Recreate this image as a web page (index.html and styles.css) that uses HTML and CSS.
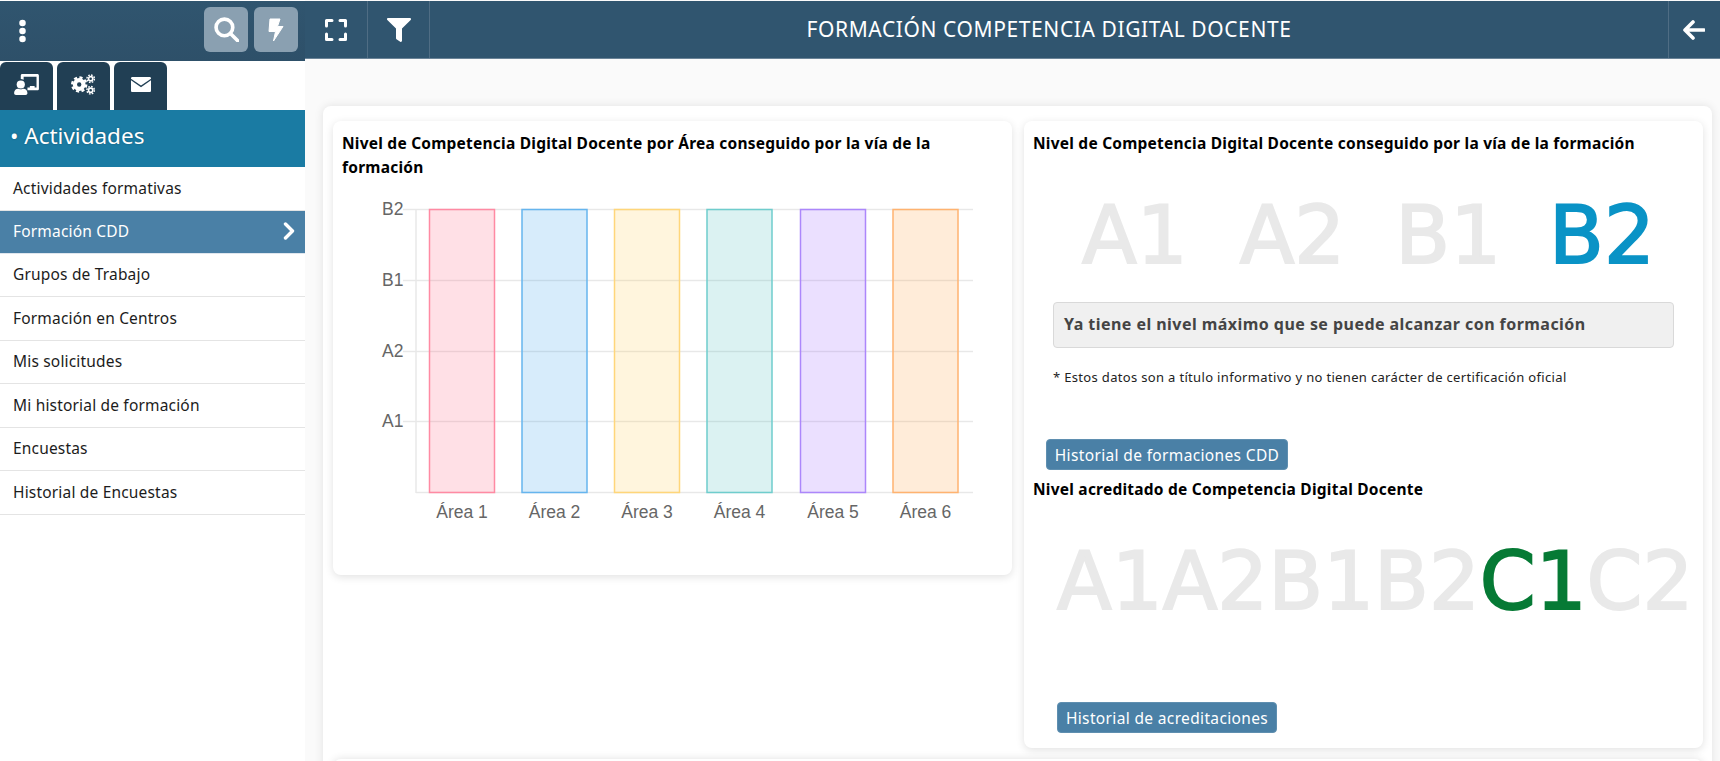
FILE: index.html
```html
<!DOCTYPE html>
<html lang="es">
<head>
<meta charset="utf-8">
<title>Formación Competencia Digital Docente</title>
<link rel="stylesheet" href="styles.css">
</head>
<body>
<div class="app">
  <aside class="sidebar">
    <div class="side-top">
      <svg class="dots" viewBox="0 0 10 26"><circle cx="5" cy="4" r="3.6"/><circle cx="5" cy="13" r="3.6"/><circle cx="5" cy="22" r="3.6"/></svg>
      <div class="side-actions">
        <button class="square"><svg viewBox="0 0 24 24" class="search"><circle cx="10" cy="10" r="8"/><path d="M16 16l7 7"/></svg></button>
        <button class="square"><svg viewBox="0 0 16 24" class="bolt"><path d="M2 1h10L9.500 8.500H15L5.500 23l2-9.500H1z"/></svg></button>
      </div>
    </div>
    <div class="tabs">
      <div class="tab"><svg viewBox="0 0 26 22" class="tab-ic"><path d="M7 1.500C7 .7 7.700 0 8.500 0h16C25.300 0 26 .7 26 1.500v14.200c0 .8-.7 1.400-1.500 1.400H14v-3h2.500v-1.500h5v1.500H23.500V2.800H10v3.300A6 6 0 0 0 7 5.300z"/><circle cx="7" cy="11" r="4.300"/><path d="M0 20c0-3 2.200-4.500 4-4.500.9 0 1.600.6 3 .6s2.100-.6 3-.6c1.800 0 4 1.500 4 4.500 0 1.200-.8 2-2 2H2c-1.200 0-2-.8-2-2z"/></svg></div>
      <div class="tab"><svg viewBox="0 0 26 22" class="tab-ic"><g fill="none" stroke="#fff"><circle cx="8.500" cy="11" r="4.500" stroke-width="4.400"/><circle cx="8.500" cy="11" r="7.400" stroke-width="2.400" stroke-dasharray="3.300 2.510"/><circle cx="20.500" cy="5" r="2.200" stroke-width="1.700"/><circle cx="20.500" cy="5" r="3.900" stroke-width="1.500" stroke-dasharray="1.700 1.360"/><circle cx="20.500" cy="17" r="2.200" stroke-width="1.700"/><circle cx="20.500" cy="17" r="3.900" stroke-width="1.500" stroke-dasharray="1.700 1.360"/></g></svg></div>
      <div class="tab"><svg viewBox="0 0 20 15" class="mail"><path d="M1.300 0h17.400c.7 0 1.300.6 1.300 1.300v.4L10 8.600 0 1.700v-.4C0 .6.600 0 1.300 0z"/><path d="M0 3.300l10 6.900 10-6.900v10.400c0 .7-.6 1.300-1.300 1.300H1.300C.6 15 0 14.400 0 13.700z"/></svg></div>
    </div>
    <h2 class="section">• Actividades</h2>
    <nav class="menu">
      <a class="item">Actividades formativas</a>
      <a class="item active">Formación CDD<svg viewBox="0 0 12 18" class="chev"><path d="M2.500 2l7 7-7 7"/></svg></a>
      <a class="item">Grupos de Trabajo</a>
      <a class="item">Formación en Centros</a>
      <a class="item">Mis solicitudes</a>
      <a class="item">Mi historial de formación</a>
      <a class="item">Encuestas</a>
      <a class="item">Historial de Encuestas</a>
    </nav>
  </aside>

  <div class="main">
    <header class="topbar">
      <div class="tool tool-a"><svg viewBox="0 0 22 22" class="expand"><path d="M1.500 7V1.500H7M15 1.500h5.500V7M20.500 15v5.500H15M7 20.500H1.500V15"/></svg></div>
      <div class="tool tool-b"><svg viewBox="0 0 512 512" class="ic24"><path d="M487.976 0H24.028C2.71 0-8.047 25.866 7.058 40.971L192 225.941V432c0 7.831 3.821 15.17 10.237 19.662l80 55.98C298.02 518.69 320 507.493 320 487.98V225.941l184.947-184.97C520.021 25.896 509.338 0 487.976 0z"/></svg></div>
      <h1 class="page-title">FORMACIÓN COMPETENCIA DIGITAL DOCENTE</h1>
      <div class="tool tool-back"><svg viewBox="0 0 22 20" class="back"><path d="M10 2l-8 8 8 8M3 10h18"/></svg></div>
    </header>

    <section class="outer">
      <div class="columns">
        <article class="card chart-card">
          <h3 class="card-title">Nivel de Competencia Digital Docente por Área conseguido por la vía de la formación</h3>
          <svg class="chart" viewBox="0 0 680 340" width="680" height="340">
            <g class="grid">
              <path d="M83 0.500V284M70 0.500H640M70 71.500H640M70 142.500H640M70 212.500H640M83 283.500H640"/>
            </g>
            <g class="ticks">
              <text x="49" y="6">B2</text><text x="49" y="77">B1</text><text x="49" y="148">A2</text><text x="49" y="218">A1</text>
            </g>
            <rect class="b1" x="96.500" y="0.500" width="65" height="283"/>
            <rect class="b2" x="189" y="0.500" width="65" height="283"/>
            <rect class="b3" x="281.500" y="0.500" width="65" height="283"/>
            <rect class="b4" x="374" y="0.500" width="65" height="283"/>
            <rect class="b5" x="467.500" y="0.500" width="65" height="283"/>
            <rect class="b6" x="560" y="0.500" width="65" height="283"/>
            <g class="cats">
              <text x="129" y="309">Área 1</text><text x="221.500" y="309">Área 2</text><text x="314" y="309">Área 3</text><text x="406.500" y="309">Área 4</text><text x="500" y="309">Área 5</text><text x="592.500" y="309">Área 6</text>
            </g>
          </svg>
        </article>

        <article class="card level-card">
          <h3 class="card-title single">Nivel de Competencia Digital Docente conseguido por la vía de la formación</h3>
          <div class="levels spaced">
            <span>A1</span><span>A2</span><span class="near">B1</span><span class="nearer on-blue">B2</span>
          </div>
          <div class="alert">Ya tiene el nivel máximo que se puede alcanzar con formación</div>
          <p class="note">* Estos datos son a título informativo y no tienen carácter de certificación oficial</p>
          <button class="btn btn-one">Historial de formaciones CDD</button>
          <h3 class="card-title single second">Nivel acreditado de Competencia Digital Docente</h3>
          <div class="levels tight">
            <span>A1</span><span>A2</span><span>B1</span><span>B2</span><span class="on-green">C1</span><span>C2</span>
          </div>
          <button class="btn btn-two">Historial de acreditaciones</button>
        </article>
      </div>
      <div class="next-card"></div>
    </section>
  </div>
</div>
</body>
</html>
```
FILE: styles.css
```css
* { box-sizing: border-box; }
html, body { margin: 0; padding: 0; height: 761px; overflow: hidden; }
body { font-family: "Noto Sans", "Open Sans", sans-serif; background: #fafafa; color: #111; }
svg { display: block; }
button { font-family: inherit; }

.app { display: grid; grid-template-columns: 305px 1fr; height: 761px; overflow: hidden; }

/* sidebar */
.sidebar { background: #fff; height: 761px; }
.side-top {
  height: 60px; margin-top: 1px; padding: 6px 7px 0 18px;
  background: linear-gradient(#30556f, #2e5069);
  display: flex; justify-content: space-between;
}
.dots { width: 9px; height: 26px; margin-top: 11px; fill: #fff; }
.side-actions { display: flex; gap: 6px; }
.square {
  width: 44px; height: 45px; border: 0; border-radius: 6px; padding: 0;
  background: #8aa0b1; display: flex; align-items: center; justify-content: center;
}
.ic24 { width: 24px; height: 24px; fill: #fff; }
.search { width: 25px; height: 25px; fill: none; stroke: #fff; stroke-width: 3.500; stroke-linecap: round; }
.bolt { width: 16px; height: 24px; fill: #fff; stroke: #fff; stroke-width: 1; stroke-linejoin: round; }

.tabs { display: flex; gap: 4px; height: 48px; margin-top: 1px; }
.tab {
  width: 53px; height: 48px; background: #213f54; border-radius: 6px 6px 0 0;
  display: flex; align-items: center; justify-content: center; padding-bottom: 4px;
}
.tab-ic { width: 25px; height: 21px; fill: #fff; }
.mail { width: 20px; height: 15px; fill: #fff; }

.section {
  margin: 0; height: 57px; padding: 11px 0 0 10px;
  background: #1a7ba3; color: #fff; font-weight: 400; font-size: 22.500px; line-height: 30px;
  text-shadow: 0 0 2px rgba(0,0,0,.3);
}
.menu { display: flex; flex-direction: column; }
.item {
  height: 43.500px; padding: 0 0 1px 13px; display: flex; align-items: center; justify-content: space-between;
  font-size: 15.500px; letter-spacing: .18px; color: #1c1c1c; border-bottom: 1px solid #e4e4e4;
}
.item.active { background: #4a80a6; color: #fff; height: 43px; padding-right: 10px; border-bottom-color: #dfe6ee; }
.chev { width: 12px; height: 18px; fill: none; stroke: #fff; stroke-width: 3.400; stroke-linecap: round; stroke-linejoin: round; }

/* main */
.main { min-width: 0; background: #fafafa; }
.topbar {
  height: 58px; margin-top: 1px; background: #30556f; border-bottom: 1px solid #6a8397;
  display: flex; align-items: stretch; position: relative; color: #fff;
}
.tool { display: flex; align-items: center; justify-content: center; border-right: 1px solid #4f6d84; }
.tool-a { width: 63px; }
.tool-b { width: 62px; }
.expand { width: 22px; height: 22px; fill: none; stroke: #fff; stroke-width: 3; stroke-linecap: round; stroke-linejoin: round; }
.page-title {
  flex: 1; margin: 0; text-align: center; font-size: 21px; font-weight: 400; line-height: 56px; letter-spacing: .6px;
}
.tool-back { width: 52px; border-right: 0; border-left: 1px solid #4f6d84; padding-right: 2px; }
.back { width: 22px; height: 20px; fill: none; stroke: #fff; stroke-width: 3.600; stroke-linecap: round; stroke-linejoin: round; }

.outer {
  margin: 47px 8px 0 18px; height: 700px; padding: 15px 9px 0 10px;
  background: #fff; border-radius: 8px 8px 0 0; box-shadow: 0 0 10px rgba(0,0,0,.1);
}
.columns { display: grid; grid-template-columns: 679px 679px; gap: 12px; align-items: start; }
.card { background: #fff; border-radius: 8px; box-shadow: 0 2px 8px rgba(0,0,0,.12); padding: 10px 9px; }
.chart-card { height: 454px; }
.level-card { height: 627px; }
.card-title { margin: 0; font-size: 15.500px; letter-spacing: .23px; line-height: 24px; font-weight: 700; color: #000; }
.next-card { margin-top: 11px; height: 40px; background: #fff; box-shadow: 0 0 8px rgba(0,0,0,.12); border-radius: 8px 8px 0 0; }

.chart { margin: 30px 0 0 -9px; overflow: visible; }
.grid path { fill: none; stroke: rgba(0,0,0,.09); stroke-width: 1.500; }
.ticks text { font-family: "Liberation Sans", Arial, sans-serif; font-size: 17.500px; fill: #666; }
.cats text { font-family: "Liberation Sans", Arial, sans-serif; font-size: 17.500px; fill: #666; text-anchor: middle; }
.b1 { fill: rgba(255,99,132,.2); stroke: #ff8aa3; stroke-width: 1.500; }
.b2 { fill: rgba(54,162,235,.2); stroke: #66b5ee; stroke-width: 1.500; }
.b3 { fill: rgba(255,206,86,.2); stroke: #ffd67a; stroke-width: 1.500; }
.b4 { fill: rgba(75,192,192,.2); stroke: #6fcdcd; stroke-width: 1.500; }
.b5 { fill: rgba(153,102,255,.2); stroke: #ac87fb; stroke-width: 1.500; }
.b6 { fill: rgba(255,159,64,.2); stroke: #ffb370; stroke-width: 1.500; }

.levels {
  display: flex; font-family: "DejaVu Sans", sans-serif; font-size: 80px; line-height: 84px; color: #e9e9e9; font-weight: 400;
  -webkit-text-stroke: 2px currentColor; stroke-linejoin: round;
}
.levels.spaced { margin: 39px 0 0 49px; gap: 52px; }
.near { margin-left: -2px; }
.nearer { margin-left: -4px; }
.levels.tight { margin: 39px 0 0 24px; }
.on-blue { color: #0a93c6; }
.on-green { color: #067a35; }
.alert {
  margin: 24px 20px 0 20px; height: 46px; padding-left: 10px; line-height: 42px;
  background: #f0f0f0; border: 1px solid #d9d9d9; border-radius: 4px;
  font-size: 16px; letter-spacing: .45px; font-weight: 700; color: #444;
}
.note { margin: 19px 0 0 20px; font-size: 13px; letter-spacing: .33px; line-height: 20px; color: #222; }
.btn {
  display: block; height: 31px; padding: 0; border: 1px solid #5f8fb0; border-radius: 4px;
  background: #4a80a6; color: #fff; font-size: 15.500px; letter-spacing: .35px;
}
.btn-one { margin: 52px 0 0 13px; width: 242px; }
.second { margin-top: 7px; }
.btn-two { margin: 78px 0 0 24px; width: 220px; }
```
